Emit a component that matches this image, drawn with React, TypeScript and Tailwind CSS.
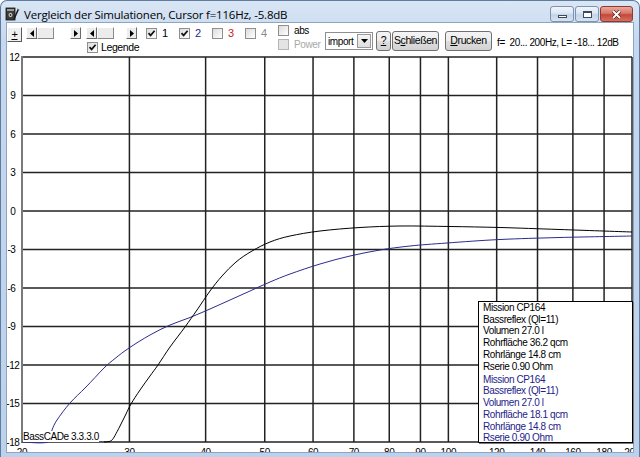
import React from 'react'

const FREQS = [20, 30, 40, 50, 60, 70, 80, 90, 100, 120, 140, 160, 180, 200]
const DBS = [12, 9, 6, 3, 0, -3, -6, -9, -12, -15, -18]

// page coordinates: plot from x=22 (20 Hz) to x=632 (200 Hz), y=57 (12 dB) to y=442 (-18 dB)
const fx = (f: number) => 22 + 610 * Math.log10(f / 20)
const fy = (db: number) => 211 - db * (38.5 / 3)

const black: number[][] = [
  [104, 442], [109, 441.5], [112, 440], [115, 435.5], [120, 426], [126, 414], [131, 404], [140, 390],
  [150, 376], [158, 365], [170, 347], [185, 327], [197, 310], [210, 291], [222, 276], [236, 262],
  [252, 251], [270, 242], [290, 236], [320, 231], [360, 227.5], [400, 226], [450, 226.5],
  [500, 227.5], [560, 229.5], [632, 232],
]

const blue: number[][] = [
  [22, 442], [48, 442], [52, 430], [57, 420], [70, 403], [85, 388], [95, 377.5], [105, 367],
  [115, 358.5], [129, 348], [150, 335], [170, 325], [190, 317.5], [210, 309], [230, 300], [250, 291],
  [270, 282], [290, 274], [320, 264], [350, 256], [380, 250], [410, 246], [447, 243],
  [500, 239.5], [560, 237.5], [632, 236],
]

function smooth(pts: number[][]) {
  let d = `M${pts[0][0]},${pts[0][1]}`
  for (let i = 0; i < pts.length - 1; i++) {
    const p0 = pts[i - 1] || pts[i]
    const p1 = pts[i]
    const p2 = pts[i + 1]
    const p3 = pts[i + 2] || p2
    const c1x = p1[0] + (p2[0] - p0[0]) / 6
    const c1y = p1[1] + (p2[1] - p0[1]) / 6
    const c2x = p2[0] - (p3[0] - p1[0]) / 6
    const c2y = p2[1] - (p3[1] - p1[1]) / 6
    d += ` C${c1x.toFixed(1)},${c1y.toFixed(1)} ${c2x.toFixed(1)},${c2y.toFixed(1)} ${p2[0]},${p2[1]}`
  }
  return d
}

function Check({ checked, disabled }: { checked?: boolean; disabled?: boolean }) {
  return (
    <span
      className={
        disabled
          ? 'flex h-[11px] w-[11px] shrink-0 border border-[#b5b5b5] bg-[#e4e4e4]'
          : 'flex h-[11px] w-[11px] shrink-0 items-center justify-center border border-[#8e8f8f] bg-[linear-gradient(135deg,#dcdcdc,#ffffff)]'
      }
    >
      {checked && (
        <svg width="9" height="9" viewBox="0 0 9 9">
          <path d="M1.5 4.2 L3.6 6.4 L7.6 1.8" fill="none" stroke="#111" strokeWidth="1.7" />
        </svg>
      )}
    </span>
  )
}

function Arrow({ dir }: { dir: 'l' | 'r' }) {
  return (
    <span className="flex h-[12px] w-[11px] items-center justify-center border border-t-white border-l-white border-r-[#6a6a6a] border-b-[#6a6a6a] bg-[#ececec]">
      <svg width="4" height="7" viewBox="0 0 4 7">
        <path d={dir === 'l' ? 'M4 0 L0 3.5 L4 7Z' : 'M0 0 L4 3.5 L0 7Z'} fill="#000" />
      </svg>
    </span>
  )
}

function ScrollBar({ track }: { track: number }) {
  return (
    <div className="flex h-[12px] bg-white">
      <Arrow dir="l" />
      <span className="h-[12px] w-[17px] border border-t-white border-l-white border-r-[#8a8a8a] border-b-[#8a8a8a] bg-[#ececec]" />
      <span style={{ width: track }} />
      <Arrow dir="r" />
    </div>
  )
}

function SeriesCheck({ label, checked, color }: { label: string; checked?: boolean; color: string }) {
  return (
    <div className="flex w-[33px] items-center">
      <Check checked={checked} />
      <span className={`ml-[5px] text-[11px] leading-[11px] ${color}`}>{label}</span>
    </div>
  )
}

function PushButton({ children, width }: { children: React.ReactNode; width: string }) {
  return (
    <div
      className={`${width} flex h-[20px] items-center justify-center rounded-[3px] border border-[#707070] bg-[linear-gradient(#f4f4f4,#ececec_48%,#dedede_52%,#d2d2d2)] text-[10.5px] text-black`}
    >
      {children}
    </div>
  )
}

function CaptionButton({ kind }: { kind: 'min' | 'max' | 'close' }) {
  if (kind === 'close') {
    return (
      <div className="flex h-[16px] w-[33px] items-center justify-center rounded-[3px] border border-[#8a3b32] bg-[linear-gradient(#e9a99c,#d8766a_45%,#c4473a_55%,#d5705c)]">
        <svg width="11" height="9" viewBox="0 0 11 9">
          <path d="M2 1 L9 8 M9 1 L2 8" stroke="#5a1d17" strokeWidth="3.2" />
          <path d="M2 1 L9 8 M9 1 L2 8" stroke="#fff" strokeWidth="1.8" />
        </svg>
      </div>
    )
  }
  return (
    <div className="flex h-[16px] w-[24px] items-center justify-center rounded-[3px] border border-[#7d93b0] bg-[linear-gradient(#f0f5fb,#dbe6f3_45%,#c3d4e9_55%,#d6e3f1)]">
      {kind === 'min' ? (
        <span className="mt-[5px] h-[3px] w-[9px] border border-[#394a61] bg-white" />
      ) : (
        <span className="h-[7px] w-[9px] border border-[#394a61] border-t-2 bg-white" />
      )}
    </div>
  )
}

function AppIcon() {
  return (
    <svg width="15" height="14" viewBox="0 0 15 14">
      <rect x="1" y="1" width="9" height="12" fill="#3c3c3c" stroke="#111" strokeWidth="0.8" />
      <rect x="2" y="2" width="7" height="2" fill="#9a9a9a" />
      <circle cx="5.5" cy="8" r="2.4" fill="#d8d8d8" stroke="#111" strokeWidth="0.6" />
      <circle cx="5.5" cy="8" r="0.9" fill="#222" />
      <path d="M9 12 L13.5 2" stroke="#1a1a1a" strokeWidth="1.6" />
      <path d="M12.4 2 L14.2 2.8" stroke="#777" strokeWidth="1" />
    </svg>
  )
}

function Chart() {
  return (
    <svg width="626" height="402" viewBox="7 50 626 402" className="block">
      {FREQS.map((f) => (
        <line key={f} x1={fx(f)} x2={fx(f)} y1={57} y2={442} stroke="#222" strokeWidth="1.5" />
      ))}
      {DBS.map((db) => (
        <line key={db} x1={22} x2={632} y1={fy(db)} y2={fy(db)} stroke="#222" strokeWidth="1.6" />
      ))}
      <line x1={22} x2={22} y1={56} y2={443} stroke="#7a7a7a" strokeWidth="2" />
      {DBS.map((db) => (
        <text
          key={db}
          x={Math.abs(db) >= 10 ? 19.5 : 15.5}
          y={fy(db) + 3.6}
          textAnchor="end"
          fontSize="10"
          fill="#000"
          letterSpacing="-0.4"
          fontFamily="'Liberation Sans', Arial, sans-serif"
        >
          {db}
        </text>
      ))}
      {FREQS.map((f) => (
        <text
          key={f}
          x={fx(f)}
          y={456}
          textAnchor="middle"
          fontSize="10"
          fill="#000"
          letterSpacing="-0.4"
          fontFamily="'Liberation Sans', Arial, sans-serif"
        >
          {f}
        </text>
      ))}
      <path d={smooth(blue)} fill="none" stroke="#2b2b8c" strokeWidth="1" />
      <path d={smooth(black)} fill="none" stroke="#000" strokeWidth="1" />
    </svg>
  )
}

const legendBlack = ['Mission CP164', 'Bassreflex (Ql=11)', 'Volumen 27.0 l', 'Rohrfläche 36.2 qcm', 'Rohrlänge 14.8 cm', 'Rserie 0.90 Ohm']
const legendBlue = ['Mission CP164', 'Bassreflex (Ql=11)', 'Volumen 27.0 l', 'Rohrfläche 18.1 qcm', 'Rohrlänge 14.8 cm', 'Rserie 0.90 Ohm']

export default function App() {
  return (
    <div className="h-[457px] w-[640px] overflow-hidden bg-white">
      <div className="flex h-[457px] w-[640px] flex-col rounded-t-[7px] border border-b-0 border-[#5f7c9f] bg-[linear-gradient(#d9e6f5,#c6d8ef_40px,#bcd1eb)] font-['Liberation_Sans',Arial,sans-serif] tracking-[-0.4px] text-black">
        {/* title bar */}
        <div className="flex h-[21px] shrink-0 items-start">
          <div className="ml-[4px] mt-[6px]">
            <AppIcon />
          </div>
          <span className="ml-[4px] mt-[6px] font-['Open_Sans',sans-serif] text-[11.5px] leading-[16px] tracking-[-0.2px] text-black">
            Vergleich der Simulationen, Cursor f=116Hz, -5.8dB
          </span>
          <div className="ml-auto mr-[6px] mt-[5px] flex gap-[1px]">
            <CaptionButton kind="min" />
            <CaptionButton kind="max" />
            <CaptionButton kind="close" />
          </div>
        </div>

        {/* client area */}
        <div className="relative mx-[5px] mb-[4px] flex-1 border border-[#8ea4c0] bg-white">
          {/* toolbar */}
          <div className="flex h-[27px] items-start text-[10px]">
            <div className="flex flex-col">
              <div className="mt-[4px] flex h-[15px] items-start">
                <div className="flex h-[15px] w-[15px] items-center justify-center border border-t-white border-l-white border-r-[#5a5a5a] border-b-[#5a5a5a] bg-[#efefef] text-[11px] leading-none">
                  <span className="underline">+</span>
                </div>
                <div className="ml-[4px]">
                  <ScrollBar track={16} />
                </div>
                <div className="ml-[5px]">
                  <ScrollBar track={12} />
                </div>
                <div className="ml-[9px] mt-[1px] flex">
                  <SeriesCheck label="1" checked color="text-black" />
                  <SeriesCheck label="2" checked color="text-[#23238a]" />
                  <SeriesCheck label="3" color="text-[#c42323]" />
                  <SeriesCheck label="4" color="text-[#8a8a8a]" />
                </div>
              </div>
              <div className="ml-[80px] flex items-center">
                <Check checked />
                <span className="ml-[3px] text-[10.5px] leading-[11px]">Legende</span>
              </div>
            </div>
            <div className="mt-[2px] flex w-[47px] flex-col gap-[3px]">
              <div className="flex items-center">
                <Check />
                <span className="ml-[5px] text-[10px] leading-[11px]">abs</span>
              </div>
              <div className="flex items-center">
                <Check disabled />
                <span className="ml-[5px] text-[10px] leading-[11px] text-[#a8a8a8]">Power</span>
              </div>
            </div>
            <div className="mt-[9px] flex h-[18px] w-[48px] items-center border border-[#8f8f8f] bg-white">
              <span className="ml-[2px] flex-1 text-[10px]">import</span>
              <span className="mr-[1px] flex h-[14px] w-[14px] items-center justify-center border border-[#9a9a9a] bg-[linear-gradient(#f6f6f6,#dedede)]">
                <svg width="7" height="4" viewBox="0 0 7 4">
                  <path d="M0 0 L7 0 L3.5 4Z" fill="#000" />
                </svg>
              </span>
            </div>
            <div className="ml-[3px] mt-[8px]">
              <PushButton width="w-[15px]">
                <span className="underline">?</span>
              </PushButton>
            </div>
            <div className="ml-[1px] mt-[8px]">
              <PushButton width="w-[47px]">
                <span>
                  S<span className="underline">c</span>hließen
                </span>
              </PushButton>
            </div>
            <div className="ml-[6px] mt-[8px]">
              <PushButton width="w-[47px]">
                <span>
                  <span className="underline">D</span>rucken
                </span>
              </PushButton>
            </div>
            <span className="ml-[5px] mt-[14px] whitespace-pre text-[10px] leading-[12px]">f=  20... 200Hz, L= -18... 12dB</span>
          </div>

          <Chart />

          {/* version label over the plot */}
          <span className="absolute left-[16px] top-[408px] bg-white text-[10px] leading-[11px]">BassCADe 3.3.3.0</span>

          {/* legend */}
          <div className="absolute left-[471px] top-[278px] h-[142px] w-[155px] border border-black bg-white pl-[4px] text-[10px] leading-[11.7px] shadow-[1px_1px_0_#7a7a7a]">
            {legendBlack.map((t) => (
              <div key={t}>{t}</div>
            ))}
            <div className="mt-[1.5px] text-[#23238a]">
              {legendBlue.map((t) => (
                <div key={t}>{t}</div>
              ))}
            </div>
          </div>
        </div>
      </div>
    </div>
  )
}
